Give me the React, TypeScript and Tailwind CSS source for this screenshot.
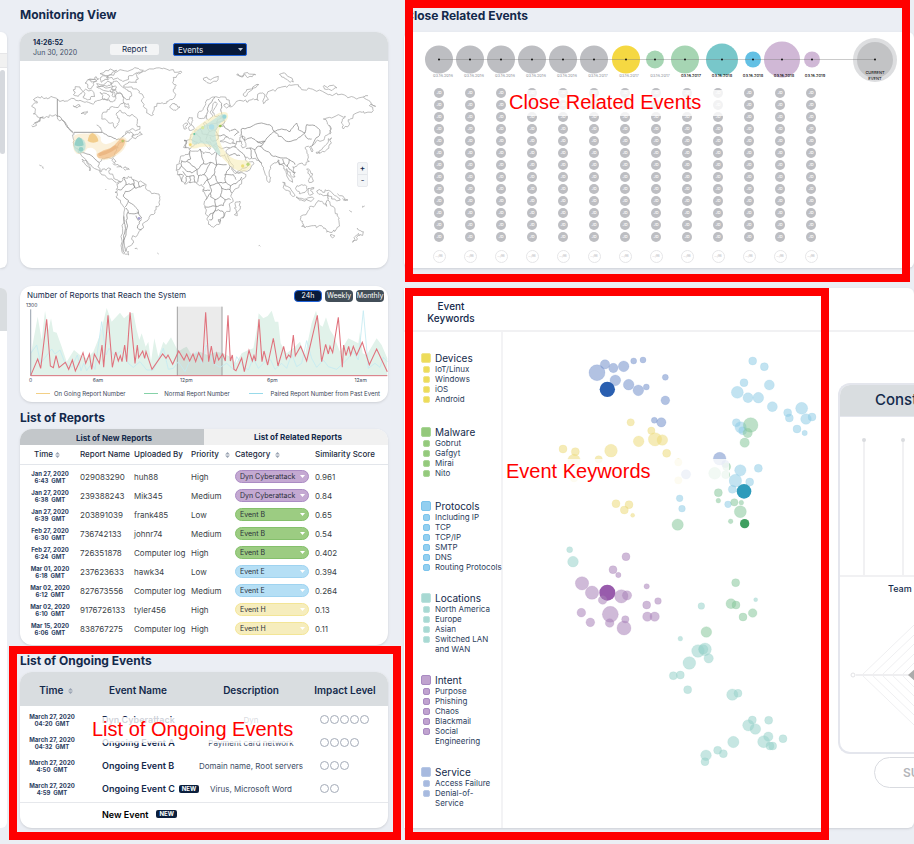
import React from "react";
import clsx from "clsx";

const INK = "#13294b";

/* ---------- world map ---------- */

// Coastlines are stored as coarse point lists and roughened when drawn.
const COASTS: string[] = [
  "95,378 112,366 132,356 150,345 172,350 185,360 200,375 208,390 222,400 220,418 222,440 235,460 248,472 262,492 270,514 258,497 246,478 258,482 275,500 300,518 318,530 332,538 348,548 365,545",
  "98,376 116,362 130,352 112,352 100,342 106,332 95,320 112,310 100,300 125,290 150,294 172,298 190,302 215,296 240,302 265,308 290,304 310,300 330,306 345,300 350,280 365,285 370,305 358,318 340,322 322,330 306,345 305,358 325,368 340,372 345,386 352,372 352,355 350,340 362,332 378,342 390,350 400,348 412,365 420,380 400,388 385,395 378,402 390,396 398,402 396,412 410,404 420,396 427,404 408,415 390,420 375,422 365,428 355,445 345,458 340,470 348,485 345,492 338,478 325,474 305,478 298,488 298,505 305,515 318,512 325,505 332,510 328,522 340,530 348,540 360,545",
  "340,245 360,255 380,270 395,285 388,300 375,295 365,282 350,275 335,265 340,245",
  "250,275 275,272 285,290 265,300 250,290 250,275",
  "220,270 240,262 248,275 235,290 220,285 220,270",
  "330,225 360,210 400,208 430,212 405,222 385,232 365,242 340,240 320,235 330,225",
  "300,222 325,214 350,212 322,228 300,222",
  "255,250 275,240 290,245 280,258 262,262 255,250",
  "300,235 320,228 325,240 305,248 300,235",
  "265,240 285,232 296,238 280,246 265,240",
  "290,262 320,265 350,262 348,270 310,272 290,262",
  "300,278 320,282 325,295 308,298 300,278",
  "330,275 345,280 340,292 330,275",
  "370,308 385,312 388,325 375,322 370,308",
  "290,252 310,256 335,250 322,260 290,252",
  "220,318 235,314 240,321 228,324 220,318",
  "243,342 262,335 255,345 243,342",
  "290,376 302,384 306,398",
  "370,260 385,250 410,248 415,235 408,225 430,215 460,208 490,205 520,210 545,218 530,228 520,245 528,258 520,275 525,290 510,300 490,312 470,320 460,335 455,348 440,340 430,320 425,300 430,290 418,280 410,268 390,262 370,260",
  "512,318 525,315 540,322 528,332 515,328 512,318",
  "612,235 630,240 655,230 650,245 630,252 618,245 612,235",
  "710,225 728,230 735,224 750,230 767,225 745,222 730,228 710,225",
  "338,492 355,497 365,504 350,502",
  "368,505 378,503 388,509 372,509",
  "355,545 372,532 385,530 400,540 415,548 432,552 440,570 455,582 478,588 480,600 468,620 465,640 448,655 438,665 430,685 415,700 408,710 395,715 398,730 385,740 380,755 386,766 370,762 363,738 368,700 372,660 375,625 362,610 350,595 345,578 352,565 358,550",
  "595,355 598,335 615,318 625,300 645,292 660,292 680,300 692,318 672,315 680,325 705,312 720,302 740,307 760,297 775,302 780,280 795,285 790,312 805,300 800,285 825,275 845,262 865,258 890,255 905,270 925,265 950,275 985,285 1010,280 1040,290 1065,295 1090,292 1110,305 1127,320 1108,318 1120,332 1090,335 1060,345 1045,360 1048,375 1030,388 1024,370 1036,350 1015,345 995,355 970,358 985,375 990,400 975,410 960,425 940,435 930,440 936,457 925,440 915,445 925,465 928,485 910,495 890,500 878,502 886,518 885,532 872,525 865,515 860,507 862,522 878,548 868,542 855,512 845,495 835,482 825,490 812,505 808,530 810,547 800,530 792,505 785,490 770,482 748,478 735,472 745,490 762,492 750,510 715,520 700,498 682,470 678,455 690,445 665,447 652,438 650,430 640,437 650,448 646,452 632,434 618,424 633,440 628,450 615,435 605,425 590,428 580,440 568,450 552,445 552,422 570,420 572,405 585,400 598,388 612,382 614,368 622,378 640,372 652,360 668,347 655,347 643,345 642,330 652,312 645,306 636,330 638,350 626,362 620,346 608,356 595,355",
  "660,425 680,412 688,418 700,420 706,432 695,430 670,427 660,425",
  "720,412 735,415 738,440 728,445 724,430 720,412",
  "565,385 572,377 564,362 567,354 577,354 576,368 583,386 568,392 565,385",
  "550,380 558,370 562,376 560,386 552,388 550,380",
  "570,452 600,448 610,462 635,465 650,460 675,465 680,480 690,500 705,522 738,525 725,547 705,568 692,590 692,610 680,635 670,655 660,672 640,683 630,675 625,650 615,625 618,600 608,575 605,555 590,548 560,552 545,545 532,525 530,505 540,480 555,465 570,452",
  "705,612 720,605 722,620 712,648 703,645 703,625 705,612",
  "902,650 925,632 935,620 950,608 965,605 970,612 980,620 985,600 992,618 1005,635 1018,655 1018,675 1005,695 990,698 975,685 965,678 940,678 915,685 905,680 908,665 902,650",
  "990,706 1002,706 998,715 990,706",
  "1072,685 1080,692 1090,696 1078,708 1074,700",
  "1076,706 1070,722 1058,728 1062,714 1076,706",
  "848,548 862,560 885,588 878,590 862,572 848,548",
  "888,592 915,598 942,597 930,604 905,602 888,592",
  "888,570 905,555 920,560 915,578 898,582 888,570",
  "925,565 942,564 932,572 940,582 926,582 925,565",
  "950,574 968,578 985,572 1010,590 1020,602 995,598 970,588 950,574",
  "1012,582 1030,590 1044,601 1028,596",
  "920,508 930,512 936,528 940,545 925,542 930,528 920,508",
  "948,460 965,450 978,435 985,417 995,415 993,432 982,448 968,455 958,462 948,460",
  "986,378 992,390 990,404",
  "730,287 740,270 775,253 775,256 745,278 735,291 730,287",
  "838,224 855,222 868,232 880,247 862,240 845,232 838,224",
  "970,260 990,258 1010,265 985,268 970,260",
  "118,496 124,500",
  "128,500 131,506",
  "316,568 319,571",
  "404,748 412,749",
  "472,760 476,763",
  "776,738 781,740",
  "1048,632 1056,638",
  "1088,624 1094,619",
  "1090,290 1104,288",
];

const BORDERS: string[] = [
  "172,350 184,356 194,368 205,385 216,396",
  "308,398 320,405 335,412 350,420 365,414 378,402",
  "240,460 256,461 270,465 282,475 298,488",
  "372,532 378,555 365,570 352,568",
  "378,555 400,552 405,562 395,570 376,575 370,590 385,602 382,612 375,622",
  "400,540 405,565 418,562 415,548",
  "418,562 434,556",
  "385,605 400,615 412,628 415,640 395,642 385,640 378,625",
  "412,636 425,655 415,662 408,648",
  "383,638 380,670 378,700 372,730 376,756",
  "372,650 374,700 368,735 374,760",
  "425,660 418,672 412,685 425,690",
  "655,298 665,312 662,330 668,347",
  "645,292 636,305 625,320 620,345",
  "590,400 600,412 605,425",
  "552,422 560,424 558,446",
  "572,420 590,427",
  "600,388 606,402 622,405 618,420",
  "622,378 628,395 622,405 640,410 655,408",
  "628,395 645,392 655,380 650,365",
  "645,392 655,408 650,422 638,425 630,412",
  "655,380 672,378 690,395 705,388 716,398 703,408",
  "655,408 672,405 682,412",
  "668,347 672,362 655,368",
  "720,408 724,388 750,383 785,370 815,380 822,395 810,405 795,425 770,425 755,414 735,422 725,405",
  "822,395 845,388 870,396 890,370 895,390 915,400 890,420 860,425 835,410 822,395",
  "915,400 920,375 945,378 960,400 945,420 935,440",
  "795,425 780,440 800,455 820,470 850,475 868,480 885,495",
  "780,440 765,450 750,445 738,448",
  "765,450 770,470 785,490",
  "750,445 755,475",
  "770,425 785,432 795,425",
  "690,445 705,442 720,455 735,472",
  "705,442 710,425 722,425",
  "685,470 705,462 720,468",
  "712,515 735,505 748,492",
  "835,480 838,495 852,490 848,478",
  "868,480 862,500 875,512 885,520",
  "852,490 862,500",
  "915,405 925,418 935,418",
  "600,448 605,465 610,492 590,510 560,485 572,478 570,455",
  "610,492 632,488 650,497 650,460",
  "650,495 680,495",
  "560,485 545,483 545,500 532,510",
  "545,500 560,515 575,520 590,510",
  "548,515 560,530 555,550",
  "560,530 582,528 585,548",
  "535,525 550,528 545,545",
  "570,530 570,550",
  "590,510 596,528 612,525 620,510 632,488",
  "596,528 592,548",
  "612,525 622,540 610,555",
  "650,497 642,525 622,540",
  "642,525 655,550 678,548 675,525 690,500",
  "622,540 630,558 655,550",
  "630,558 632,580 618,600",
  "608,570 630,572",
  "655,550 665,565 662,590 645,600 632,592 632,580",
  "665,565 690,570 695,580",
  "678,548 692,558 708,552 725,532",
  "692,558 690,570",
  "675,525 700,525 708,540",
  "662,590 675,600 692,600",
  "645,600 648,620 615,622",
  "648,620 670,618 675,600",
  "648,620 640,640 625,650",
  "640,640 655,630 672,640 668,655",
  "640,640 636,660 628,660",
  "655,660 662,662 658,668 655,660",
  "668,350 675,365 660,380",
  "985,578 985,598",
];

function roughen(list: string, amp: number, seed: number): string {
  let s = seed * 7919 + 13;
  const rnd = () => {
    s = (s * 1103515245 + 12345) % 2147483648;
    return s / 2147483648 - 0.5;
  };
  let pts = list.split(" ").map((p) => p.split(",").map(Number));
  for (let level = 0; level < 2; level++) {
    const next: number[][] = [pts[0]];
    for (let i = 1; i < pts.length; i++) {
      const [ax, ay] = pts[i - 1];
      const [bx, by] = pts[i];
      const len = Math.hypot(bx - ax, by - ay);
      if (len > 5) {
        const k = Math.min(len, 16) * amp;
        next.push([(ax + bx) / 2 + rnd() * k, (ay + by) / 2 + rnd() * k]);
      }
      next.push(pts[i]);
    }
    pts = next;
  }
  return "M" + pts.map((p) => `${p[0].toFixed(1)} ${p[1].toFixed(1)}`).join("L");
}

const coastPath = COASTS.map((c, i) => roughen(c, 0.75, i + 1)).join("");
const borderPath = BORDERS.map((c, i) => roughen(c, 0.35, i + 90)).join("");

function WorldMap() {
  return (
    <svg viewBox="60 184 1104 621" className="block w-full" role="img" aria-label="World map">
      <path d={coastPath} fill="none" stroke="#a3a3a3" strokeWidth="2.2" />
      <path d={borderPath} fill="none" stroke="#868686" strokeWidth="2.2" />
      <path d="M172 298V350M222 398H308" stroke="#8c8c8c" strokeWidth="2.5" />
      <path
        d="M222 408Q235 400 262 402Q290 396 302 412Q300 432 318 434Q345 425 358 414Q378 408 381 424Q378 450 352 466Q325 486 300 480Q284 470 290 458Q282 440 262 446Q250 466 230 462Q212 448 222 408Z"
        fill="#f6dfb0"
        fillOpacity=".45"
      />
      <path d="M292 462Q310 450 330 446Q345 436 358 420Q370 412 376 424Q372 446 350 462Q325 482 300 476Q288 472 292 462Z" fill="#f0b273" fillOpacity=".6" />
      <path d="M300 464Q330 456 346 442" stroke="#dd9557" strokeOpacity=".35" strokeWidth="10" strokeLinecap="round" fill="none" />
      <ellipse cx="239" cy="438" rx="18" ry="23" fill="#b4e0d8" fillOpacity=".7" />
      <path d="M224 437Q226 416 237 412Q250 418 251 437Q238 443 224 437Z" fill="#7cc6bd" fillOpacity=".7" />
      <circle cx="243" cy="449" r="7" fill="#7cc6bd" fillOpacity=".7" />
      <path d="M263 424Q266 402 278 400Q294 408 295 425Q279 434 263 424Z" fill="#f0c478" fillOpacity=".8" />
      <circle cx="368" cy="424" r="4" fill="#b5c46a" />
      <path
        d="M565 436Q562 405 590 382Q615 362 645 346Q668 332 682 340Q690 356 672 370Q655 385 656 405Q658 435 680 462Q700 482 728 482Q750 480 754 495Q752 512 730 516Q700 514 680 488Q655 462 640 445Q622 440 600 442Q572 454 565 436Z"
        fill="#f6edb8"
        fillOpacity=".6"
      />
      <path
        d="M576 430Q572 405 600 386Q630 368 655 350Q670 338 680 346Q684 358 664 368Q648 380 646 402Q648 430 660 455Q664 468 655 466Q642 450 632 436Q605 428 592 432Q580 438 576 430Z"
        fill="#bde3df"
        fillOpacity=".7"
      />
      <circle cx="673" cy="351" r="6" fill="#96d6d8" />
      <circle cx="635" cy="382" r="8" fill="#a8dcea" fillOpacity=".8" />
      <circle cx="608" cy="384" r="5" fill="#d8e9a0" />
      <circle cx="583" cy="403" r="3" fill="#63c7a4" />
      <circle cx="661" cy="379" r="4" fill="#94c353" />
      <circle cx="571" cy="435" r="4" fill="#f1d770" />
      <circle cx="728" cy="499" r="5" fill="#ecdf7c" />
      <circle cx="744" cy="494" r="5" fill="#b9d67a" />
      <circle cx="417" cy="656" r="4" fill="#a9a2d6" />
    </svg>
  );
}

/* ---------- reports chart ---------- */

const NORMAL =
  "92,287 92,225 113,110 125,180 135,92 145,150 153,115 160,155 170,158 185,200 200,245 222,210 240,225 260,235 280,215 300,165 320,84 335,125 360,98 372,115 390,100 400,98 410,150 418,180 425,160 437,200 445,185 453,245 463,175 475,230 490,185 498,195 513,172 535,215 550,205 560,200 575,225 600,215 622,225 650,215 670,220 690,230 708,250 725,220 745,210 760,205 770,150 776,100 790,115 803,108 815,92 825,125 835,125 842,190 860,220 885,200 900,185 915,225 935,130 948,92 960,135 968,140 978,112 990,150 1000,165 1020,215 1045,175 1075,190 1080,155 1088,220 1100,225 1115,200 1130,175 1145,195 1162,235 1162,287";
const PAIRED =
  "92,220 110,195 122,250 155,207 165,222 180,210 195,250 215,262 232,225 243,272 251,250 260,272 275,250 285,268 305,125 318,225 327,205 345,230 362,212 385,250 400,262 420,245 440,270 460,270 490,205 505,268 520,265 535,245 555,275 575,230 590,215 605,250 620,195 640,250 660,262 680,250 700,268 710,230 730,260 745,270 760,235 775,265 800,240 812,240 825,268 845,250 860,265 875,222 890,260 905,250 920,182 935,235 950,262 970,240 985,260 1010,268 1040,240 1060,215 1075,240 1090,92 1105,265 1125,250 1140,262 1150,232 1162,245";
const ONGOING =
  "92,287 113,237 122,265 140,118 151,258 160,263 168,227 177,263 196,247 206,268 217,240 226,273 238,247 249,218 257,250 268,222 275,268 283,222 298,250 306,195 311,262 324,106 337,262 347,216 355,243 361,227 366,245 374,195 380,245 390,97 405,250 412,195 416,233 428,213 434,235 438,215 456,268 488,222 498,235 504,225 518,253 536,213 552,240 560,222 569,243 579,222 587,245 596,218 608,243 617,97 626,245 634,198 643,252 650,220 656,240 668,222 676,243 684,106 691,243 697,225 702,268 708,272 725,234 733,275 747,211 757,243 762,227 767,243 777,118 786,245 792,213 803,255 820,175 834,258 851,199 859,237 866,225 872,232 880,165 886,227 902,199 920,243 952,106 965,245 977,193 985,222 990,199 998,218 1015,112 1027,262 1031,195 1038,227 1046,199 1052,225 1060,199 1070,225 1087,187 1108,254 1130,207 1162,275";

function ReportsChart() {
  return (
    <svg viewBox="60 66 1104 248" className="block w-full font-[Inter,sans-serif]" role="img" aria-label="Reports over 24 hours">
      <polygon points={NORMAL} fill="#e1f2ea" />
      <rect x="531" y="80" width="136" height="207" fill="#8a8a8a" fillOpacity=".17" />
      <path d="M532 80V287M666 80V287" stroke="#a3a3a3" strokeWidth="3" />
      <polyline points={PAIRED} fill="none" stroke="#c4eaf2" strokeWidth="2.5" />
      <path d="M92 88V287" stroke="#97a0ad" strokeWidth="3" />
      <polyline points={ONGOING} fill="none" stroke="#e0717c" strokeWidth="3.2" />
      <path d="M92 287H1162" stroke="#d8707b" strokeWidth="3" />
      <g fill="#3a4659" fontSize="15">
        <text x="78" y="81">1300</text>
        <g textAnchor="middle">
          <text x="92" y="306">0</text>
          <text x="294" y="306">6am</text>
          <text x="559" y="306">12pm</text>
          <text x="817" y="306">6pm</text>
          <text x="1082" y="306">12am</text>
        </g>
      </g>
    </svg>
  );
}

/* ---------- small parts ---------- */

function SortIcon({ className }: { className?: string }) {
  return (
    <svg viewBox="0 0 8 10" className={clsx("inline-block h-1.5 w-[5px] shrink-0", className)} aria-hidden="true">
      <path d="M4 0L8 4.3H0ZM4 10L0 5.7H8Z" fill="#9aa3b2" />
    </svg>
  );
}

function Caret({ className }: { className: string }) {
  return (
    <svg viewBox="0 0 10 6" className={clsx("pointer-events-none absolute h-[3px] w-[5px]", className)} aria-hidden="true">
      <path d="M0 0H10L5 6Z" fill="currentColor" />
    </svg>
  );
}

function NewTag() {
  return <span className="rounded-xs bg-[#0b1f3d] px-[3px] text-[6px] leading-[8px] font-bold text-white">NEW</span>;
}

/* ---------- reports table ---------- */

type Tone = "purple" | "green" | "blue" | "yellow";
const PILL: Record<Tone, string> = {
  purple: "bg-[#c4a9d2] border-[#ab8cc4]",
  green: "bg-[#9ccc82] border-[#85c06c]",
  blue: "bg-[#b5dff5] border-[#9fd3f0]",
  yellow: "bg-[#f6edbd] border-[#f3e596]",
};

const REPORTS: [string, string, string, string, string, string, Tone, string][] = [
  ["Jan 27, 2020", "6:43", "029083290", "huh88", "High", "Dyn Cyberattack", "purple", "0.961"],
  ["Jan 27, 2020", "6:38", "239388243", "Mik345", "Medium", "Dyn Cyberattack", "purple", "0.84"],
  ["Jan 27, 2020", "6:39", "203891039", "frank485", "Low", "Event B", "green", "0.65"],
  ["Feb 27, 2020", "6:30", "736742133", "johnr74", "Medium", "Event B", "green", "0.54"],
  ["Feb 27, 2020", "6:24", "726351878", "Computer log", "High", "Event B", "green", "0.402"],
  ["Mar 01, 2020", "6:18", "237623633", "hawk34", "Low", "Event E", "blue", "0.394"],
  ["Mar 02, 2020", "6:12", "827673556", "Computer log", "Medium", "Event E", "blue", "0.264"],
  ["Mar 02, 2020", "6:10", "9176726133", "tyler456", "High", "Event H", "yellow", "0.13"],
  ["Mar 15, 2020", "6:06", "838767275", "Computer log", "High", "Event H", "yellow", "0.11"],
];

function Stamp({ date, time }: { date: string; time: string }) {
  return (
    <div className="text-center text-[6px] leading-[7px] font-bold whitespace-pre text-[#2c3e5f]">
      {date}
      <br />
      {time + "  GMT"}
    </div>
  );
}

function ReportsPanel() {
  return (
    <div className="mt-[3px] h-[216px] overflow-hidden rounded-xl bg-white shadow-sm">
      <div className="flex h-4 text-[8px] font-bold">
        <button className="w-1/2 bg-[#c3c7ca] pt-0.5 pl-1">List of New Reports</button>
        <button className="w-1/2 bg-[#f1f1f1] pl-1">List of Related Reports</button>
      </div>
      <table className="w-full table-fixed border-collapse text-left text-[8px] whitespace-nowrap text-[#3b3f47]">
        <colgroup>
          <col className="w-[60px]" />
          <col className="w-[54px]" />
          <col className="w-[57px]" />
          <col className="w-[44px]" />
          <col className="w-[80px]" />
          <col />
        </colgroup>
        <thead>
          <tr className="h-[19px] border-b border-[#e3e6eb] text-[#1c2a40] [&>th]:p-0 [&>th]:font-medium">
            <th>
              <div className="pl-3.5">
                Time <SortIcon />
              </div>
            </th>
            <th>Report Name</th>
            <th>Uploaded By</th>
            <th>
              Priority <SortIcon className="ml-1" />
            </th>
            <th>
              Category <SortIcon className="ml-0.5" />
            </th>
            <th>Similarity Score</th>
          </tr>
        </thead>
        <tbody>
          <tr className="h-[3px]" />
          {REPORTS.map((r, i) => (
            <tr key={i} className="h-[19px] [&>td]:p-0">
              <td>
                <Stamp date={r[0]} time={r[1]} />
              </td>
              <td>{r[2]}</td>
              <td>{r[3]}</td>
              <td>{r[4]}</td>
              <td>
                <div className="relative w-[74px]">
                  <select
                    aria-label={`Category of report ${r[2]}`}
                    className={clsx("block h-[13px] w-full appearance-none rounded-full border pt-px pl-1 text-[7px] leading-[10px] text-[#2b2f3a]", PILL[r[6]])}
                  >
                    <option>{r[5]}</option>
                  </select>
                  <Caret className="top-[5px] right-1 text-white" />
                </div>
              </td>
              <td>{r[7]}</td>
            </tr>
          ))}
        </tbody>
      </table>
    </div>
  );
}

/* ---------- ongoing events ---------- */

const ONGOING_EVENTS: [string, string, string, boolean, number][] = [
  ["04:20", "Dyn Cyberattack", "Dyn", false, 5],
  ["04:32", "Ongoing Event A", "Payment card network", false, 4],
  ["4:50", "Ongoing Event B", "Domain name, Root servers", false, 3],
  ["4:59", "Ongoing Event C", "Virus, Microsoft Word", true, 2],
];

function OngoingPanel() {
  return (
    <div className="mt-[3px] h-[156px] overflow-hidden rounded-xl bg-white shadow-sm">
      <table className="w-full table-fixed border-collapse text-[8px] whitespace-nowrap">
        <colgroup>
          <col className="w-16" />
          <col className="w-[112px]" />
          <col className="w-[110px]" />
          <col />
        </colgroup>
        <thead>
          <tr className="h-[34px] bg-[#d9dde0] text-[10px] [&>th]:p-0 [&>th]:pt-0.5 [&>th]:font-semibold">
            <th>
              <div className="pl-2">
                Time <SortIcon className="ml-0.5" />
              </div>
            </th>
            <th>
              <div className="pr-1">Event Name</div>
            </th>
            <th>Description</th>
            <th>
              <div className="pr-1">Impact Level</div>
            </th>
          </tr>
        </thead>
        <tbody>
          <tr className="h-[2px]" />
          {ONGOING_EVENTS.map(([time, name, desc, isNew, level]) => (
            <tr key={name} className="h-[23px] [&>td]:p-0">
              <td>
                <Stamp date="March 27, 2020" time={time} />
              </td>
              <td>
                <div className="flex items-center gap-1 pl-[18px] text-[9px] font-semibold">
                  {name}
                  {isNew && <NewTag />}
                </div>
              </td>
              <td className="text-center text-[#3d4c66]">{desc}</td>
              <td>
                <div className="flex gap-px pl-3.5">
                  {Array.from({ length: level }, (_, i) => (
                    <span key={i} className="size-[9px] rounded-full border border-[#a4abb8]" />
                  ))}
                </div>
              </td>
            </tr>
          ))}
          <tr className="h-[2px]" />
          <tr className="h-6 border-t border-[#e6e8ec]">
            <td />
            <td className="p-0">
              <div className="flex items-center gap-2 pl-[18px] text-[9px] font-semibold text-black">
                New Event <NewTag />
              </div>
            </td>
            <td />
            <td />
          </tr>
        </tbody>
      </table>
    </div>
  );
}

/* ---------- close related events ---------- */

const TIMELINE: [number, number, string, string, boolean][] = [
  [35, 14, "#bdbec2", "03.16.2016", false],
  [66, 14, "#bdbec2", "03.16.2016", false],
  [97, 14, "#bdbec2", "03.16.2016", false],
  [128, 14, "#bdbec2", "03.16.2016", false],
  [159, 14, "#bdbec2", "03.16.2016", false],
  [190, 14, "#bdbec2", "03.16.2017", false],
  [222, 14, "#f5d842", "03.16.2017", false],
  [251, 9, "#a6d5b3", "03.16.2017", false],
  [281, 14, "#a6d5b3", "03.16.2017", true],
  [318, 16, "#78c7ca", "03.16.2018", true],
  [349, 8, "#63c0e4", "03.16.2018", true],
  [378, 18, "#d0b8d6", "03.16.2018", true],
  [408, 8, "#d0b8d6", "03.16.2019", true],
];

function CloseRelated() {
  return (
    <div className="h-[236px] overflow-hidden rounded-md bg-white shadow-sm">
      <svg viewBox="0 0 510 54" className="block h-[54px] w-[510px] font-[Inter,sans-serif]" role="img" aria-label="Timeline of related events">
        <circle cx="471" cy="28" r="22" fill="#dddee0" />
        <circle cx="471" cy="28" r="18" fill="#c2c3c5" />
        {TIMELINE.map(([x, r, fill]) => (
          <circle key={x} cx={x} cy="27.500" r={r} fill={fill} />
        ))}
        <path d="M35 27.500H471" stroke="#777" strokeOpacity=".55" strokeWidth=".7" />
        {TIMELINE.map(([x, , , date, strong], i) => (
          <g key={x}>
            <circle cx={x} cy="27.500" r=".9" fill="#000" />
            <text x={39 + i * 31} y="45" textAnchor="middle" fontSize="4" fill={strong ? "#111" : "#888c95"} fontWeight={strong ? 500 : 400}>
              {date}
            </text>
          </g>
        ))}
        <circle cx="471" cy="27.500" r=".9" fill="#000" />
        <g textAnchor="middle" fontSize="4" fontWeight="500" fill="#222">
          <text x="471" y="42">CURRENT</text>
          <text x="471" y="48">EVENT</text>
        </g>
      </svg>
      <div className="flex gap-[21px] pl-[30px]">
        {TIMELINE.map(([x]) => (
          <div key={x} className="flex w-2.5 shrink-0 flex-col items-center gap-0.5 pt-0.5">
            {Array.from({ length: 13 }, (_, i) => (
              <span key={i} className="grid size-2.5 place-items-center rounded-full bg-[#bdbec2] text-[4px] leading-none font-medium text-white">
                JD
              </span>
            ))}
            <span className="mt-1.5 grid size-[13px] shrink-0 place-items-center rounded-full border border-[#e6e6e8] text-[3px] leading-none text-[#b5b5b8]">…/96</span>
          </div>
        ))}
      </div>
    </div>
  );
}

/* ---------- keywords ---------- */

const GROUPS: { name: string; box: string; gap: string; items: string[] }[] = [
  { name: "Devices", box: "bg-[#eddc5a] border-[#f1e58c]", gap: "mt-5", items: ["IoT/Linux", "Windows", "iOS", "Android"] },
  { name: "Malware", box: "bg-[#94c97c] border-[#a9d696]", gap: "mt-[22px]", items: ["Gobrut", "Gafgyt", "Mirai", "Nito"] },
  { name: "Protocols", box: "bg-[#93cff0] border-[#7cc4ec]", gap: "mt-[22px]", items: ["Including IP", "TCP", "TCP/IP", "SMTP", "DNS", "Routing Protocols"] },
  { name: "Locations", box: "bg-[#a8d9d3] border-[#bde3de]", gap: "mt-5", items: ["North America", "Europe", "Asian", "Switched LAN and WAN"] },
  { name: "Intent", box: "bg-[#c0a3cf] border-[#a98bc2]", gap: "mt-5", items: ["Purpose", "Phishing", "Chaos", "Blackmail", "Social Engineering"] },
  { name: "Service", box: "bg-[#a7badf] border-[#b7c8e6]", gap: "mt-5", items: ["Access Failure", "Denial-of-Service"] },
];

type Dot = [number, number, number];
const UPPER: { fill: string; dots: Dot[] }[] = [
  {
    fill: "#7390cb",
    dots: [[171, 98, 24], [195, 73, 14], [220, 84, 14], [251, 79, 16], [281, 63, 9], [309, 60, 9], [226, 121, 16], [266, 134, 16], [295, 151, 16], [319, 141, 9], [376, 112, 9], [376, 181, 13], [343, 241, 9], [364, 247, 14], [539, 356, 19], [438, 403, 14], [556, 372, 11]],
  },
  {
    fill: "#ecdb7c",
    dots: [[272, 247, 11], [334, 272, 11], [345, 298, 20], [367, 300, 16], [296, 304, 16], [380, 340, 12], [213, 332, 19], [69, 327, 12], [106, 335, 12], [102, 362, 19], [176, 358, 11], [228, 491, 12], [267, 494, 12], [253, 510, 12], [278, 526, 6], [415, 367, 11], [415, 421, 11], [102, 415, 11]],
  },
  {
    fill: "#90cce6",
    dots: [[638, 63, 12], [673, 80, 12], [612, 128, 12], [688, 135, 15], [592, 157, 18], [624, 173, 15], [655, 173, 16], [697, 200, 15], [743, 218, 12], [748, 234, 12], [785, 205, 18], [798, 237, 16], [816, 231, 12], [771, 267, 12], [794, 279, 8], [589, 248, 12], [602, 262, 17], [608, 272, 12], [601, 391, 17], [655, 385, 12], [586, 422, 19], [629, 426, 12], [577, 448, 12], [564, 493, 10], [419, 475, 10], [426, 506, 10]],
  },
  {
    fill: "#86c79a",
    dots: [[632, 255, 22], [623, 279, 14], [614, 308, 14], [524, 400, 18], [560, 380, 12], [557, 404, 12], [535, 458, 12], [535, 482, 7], [583, 487, 11], [604, 488, 7], [601, 515, 18], [572, 544, 7], [413, 554, 17]],
  },
];
const LOWER: { fill: string; dots: Dot[] }[] = [
  {
    fill: "#97d1ca",
    dots: [[89, 44, 9], [99, 80, 16], [484, 213, 10], [647, 194, 6], [421, 311, 7], [474, 348, 19], [495, 343, 19], [490, 343, 14], [506, 370, 14], [448, 384, 19], [400, 422, 12], [421, 420, 12], [443, 464, 12], [577, 479, 17], [594, 475, 12], [637, 555, 12], [625, 571, 17], [646, 582, 16], [686, 556, 12], [685, 605, 14], [671, 620, 18], [690, 633, 12], [698, 633, 12], [729, 611, 12], [580, 621, 17], [533, 646, 12], [550, 656, 12], [498, 661, 16], [495, 680, 12]],
  },
  {
    fill: "#a881b8",
    dots: [[258, 65, 12], [219, 104, 12], [235, 120, 8], [126, 145, 20], [156, 173, 20], [188, 195, 13], [244, 184, 20], [261, 181, 14], [320, 154, 8], [354, 198, 10], [320, 210, 12], [322, 245, 14], [344, 245, 14], [124, 233, 13], [151, 262, 13], [211, 238, 24], [209, 264, 13], [256, 253, 11], [252, 279, 21]],
  },
  { fill: "#86c79a", dots: [[587, 143, 12], [573, 206, 15], [588, 210, 12], [638, 234, 13], [609, 246, 12], [499, 291, 16]] },
];

function Cluster({ sets }: { sets: typeof UPPER }) {
  return (
    <>
      {sets.map((s, k) =>
        s.dots.map(([x, y, r]) => (
          <circle key={`${k}-${x}-${y}`} cx={x} cy={y} r={r} fill={s.fill} fillOpacity=".55" stroke={s.fill} strokeOpacity=".3" strokeWidth="2" />
        )),
      )}
    </>
  );
}

function KeywordMap() {
  return (
    <svg viewBox="0 0 335 496" className="block h-[496px] w-[335px] shrink-0" role="img" aria-label="Keyword clusters">
      <g transform="translate(37 8) scale(.33333)">
        <Cluster sets={UPPER} />
        <circle cx="202" cy="148" r="23" fill="#2a5fb0" />
        <circle cx="612" cy="454" r="22" fill="#2e9bbb" />
        <circle cx="614" cy="551" r="14" fill="#3f9f60" />
      </g>
      <g transform="translate(37 203) scale(.33333)">
        <circle cx="202" cy="173" r="24" fill="#985bac" />
        <Cluster sets={LOWER} />
      </g>
    </svg>
  );
}

function ConstraintsCard() {
  return (
    <div className="mt-[51px] min-w-0 flex-1">
      <div className="h-[371px] overflow-hidden rounded-l-xl border-2 border-r-0 border-[#e4e6ed] bg-white">
        <div className="flex h-8 items-center border-b border-[#e4e6ed] bg-[#d9dde0] pl-[35px] text-[15px] font-medium whitespace-nowrap">Const</div>
        <svg viewBox="0 0 74 160" className="block h-40 w-[74px]" aria-hidden="true">
          <path d="M24 23V159M63 23V159M0 159H74" stroke="#f1f1f3" strokeWidth="2" />
          <circle cx="24" cy="23" r="2" fill="#dadcdf" />
          <circle cx="63" cy="23" r="2" fill="#dadcdf" />
        </svg>
        <div className="pt-1.5 pl-12 text-[9px] leading-[12px] font-medium">Team</div>
        <svg viewBox="0 0 74 120" className="mt-5 block h-[120px] w-[74px]" aria-hidden="true">
          <g fill="none" stroke="#efeff1">
            <path d="M74 10L22 60L74 110M74 20L32 60L74 100M74 29L42 60L74 91M74 39L52 60L74 81M74 48L62 60L74 72" />
            <path d="M16 60H70" strokeWidth="2" />
            <circle cx="13" cy="60" r="2" stroke="#e2e2e5" />
          </g>
          <path d="M68 60L76 53V67Z" fill="#ababab" />
        </svg>
      </div>
      <button className="mt-[3px] ml-9 flex h-[31px] w-20 items-center rounded-full border border-[#d9dbe0] bg-white pl-7 text-[12px] font-semibold text-[#b4b6ba]">SU</button>
    </div>
  );
}

/* ---------- highlighted areas ---------- */

function Highlight({ frame, label, text }: { frame: string; label: string; text: string }) {
  return (
    <>
      <div className={clsx("pointer-events-none absolute border-8 border-[#ff0000]", frame)} />
      <div
        className={clsx(
          "pointer-events-none absolute h-[26px] w-[225px] bg-white/80 pl-0.5 font-['Liberation_Sans',Arial,sans-serif] text-[20px] leading-[24px] whitespace-nowrap text-[#ff0000]",
          label,
        )}
      >
        {text}
      </div>
    </>
  );
}

export default function App() {
  const tab = "h-3 rounded-sm text-center text-[7px] leading-[10px]";
  const title = "text-[12px] leading-[16px] font-bold";
  return (
    <div className="relative flex min-h-screen w-full overflow-hidden bg-[#ebeef4] pb-4 font-[Inter,sans-serif]" style={{ color: INK }}>
      {/* edge of the neighbouring column */}
      <aside className="flex w-[7px] shrink-0 flex-col gap-5 pt-8">
        <div className="h-[236px] rounded-r-md bg-white shadow-sm">
          <div className="mt-[21px] h-[15px] border-y border-[#e6e6e8] bg-[#f1f1f1]" />
          <div className="mt-0.5 h-[84px] w-[5px] rounded-full bg-[#d6d9de]" />
        </div>
        <div className="flex-1 overflow-hidden rounded-r-md bg-white">
          <div className="h-[43px] bg-[#d9dde0]" />
        </div>
      </aside>

      <div className="ml-[13px] w-[368px] shrink-0 pt-[7px]">
        <h1 className={title}>Monitoring View</h1>
        <section className="relative mt-[9px] overflow-hidden rounded-xl bg-white shadow-sm">
          <header className="flex h-[29px] items-center bg-[#d9dde0] pl-[13px] text-[8px]">
            <div className="w-[77px] pt-0.5 text-[7px] leading-[10px]">
              <div className="font-bold">14:26:52</div>
              <div className="text-[#42506a]">Jun 30, 2020</div>
            </div>
            <button className="mt-1.5 h-[11px] w-[49px] rounded-xs bg-[#f3f4f5] leading-[11px]">Report</button>
            <div className="relative mt-1.5 ml-3.5">
              <select aria-label="Layer" className="block h-[13px] w-[74px] appearance-none rounded-xs border border-[#2163d9] bg-[#07193a] pl-1 text-[8px] text-[#e3e8f0]">
                <option>Events</option>
              </select>
              <Caret className="top-[5px] right-1 text-[#c3cad6]" />
            </div>
          </header>
          <WorldMap />
          <div className="absolute top-[130px] right-5 flex w-[11px] flex-col rounded-xs border border-[#e8eaee] bg-[#f3f5f7] text-[8px] leading-[11px] font-semibold">
            <button className="h-3 border-b border-[#e3e6ea]">+</button>
            <button className="h-[11px] font-normal">-</button>
          </div>
        </section>

        <section className="mt-[18px] h-[116px] overflow-hidden rounded-xl bg-white shadow-sm">
          <header className="flex h-4 items-end justify-between pr-1 pl-[7px]">
            <h2 className="text-[8px] leading-[13px] whitespace-nowrap">Number of Reports that Reach the System</h2>
            <div className="flex gap-[3px] text-white">
              <button className={clsx(tab, "w-7 border border-[#2163d9] bg-[#07193a]")}>24h</button>
              <button className={clsx(tab, "w-7 bg-[#424e58]")}>Weekly</button>
              <button className={clsx(tab, "w-7 bg-[#424e58]")}>Monthly</button>
            </div>
          </header>
          <ReportsChart />
          <div className="flex items-center justify-between pt-[5px] pr-2 pl-4 text-[6px] leading-[8px] text-[#3b465a]">
            <span className="flex items-center gap-1">
              <span className="h-px w-3.5 bg-[#f3d086]" />
              On Going Report Number
            </span>
            <span className="flex items-center gap-1.5">
              <span className="h-px w-3.5 bg-[#85d2a8]" />
              Normal Report Number
            </span>
            <span className="flex items-center gap-2">
              <span className="h-px w-3.5 bg-[#98daea]" />
              Paired Report Number from Past Event
            </span>
          </div>
        </section>

        <h2 className={clsx(title, "mt-2")}>List of Reports</h2>
        <ReportsPanel />
        <h2 className={clsx(title, "mt-2")}>List of Ongoing Events</h2>
        <OngoingPanel />
      </div>

      <div className="ml-4 flex min-w-0 flex-1 flex-col pt-2">
        <h2 className={clsx(title, "mb-2 pl-px")}>Close Related Events</h2>
        <CloseRelated />
        <section className="mt-5 flex-1 overflow-hidden rounded-r-md bg-white shadow-sm">
          <header className="flex h-11 items-center border-b-2 border-[#f1f1f3]">
            <h2 className="ml-3 w-[70px] pt-1.5 text-center text-[10px] leading-[12px] font-medium">Event Keywords</h2>
          </header>
          <div className="flex">
            <ul className="h-[496px] w-[99px] shrink-0 border-r-2 border-[#f3f3f5] pl-[17px]">
              {GROUPS.map((g) => (
                <li key={g.name} className={g.gap}>
                  <div className="flex h-3 items-center gap-1 text-[10px] leading-[12px]">
                    <span className={clsx("size-2.5 shrink-0 rounded-xs border", g.box)} />
                    {g.name}
                  </div>
                  <ul className="text-[8px] leading-[10px] text-[#2b3d5c]">
                    {g.items.map((item) => (
                      <li key={item} className="flex gap-[5px]">
                        <span className={clsx("mt-0.5 ml-0.5 size-[7px] shrink-0 rounded-xs border", g.box)} />
                        <span className={clsx(item.startsWith("Routing") && "whitespace-nowrap", "w-[60px]")}>{item}</span>
                      </li>
                    ))}
                  </ul>
                </li>
              ))}
            </ul>
            <KeywordMap />
            <ConstraintsCard />
          </div>
        </section>
      </div>

      <Highlight frame="left-[405px] top-0 h-[282px] w-[505px]" label="left-[507px] top-[90px]" text="Close Related Events" />
      <Highlight frame="left-[405px] top-[288px] h-[552px] w-[424px]" label="left-[504px] top-[459px]" text="Event Keywords" />
      <Highlight frame="left-[9px] top-[646px] h-[194px] w-[392px]" label="left-[90px] top-[717px]" text="List of Ongoing Events" />
    </div>
  );
}
